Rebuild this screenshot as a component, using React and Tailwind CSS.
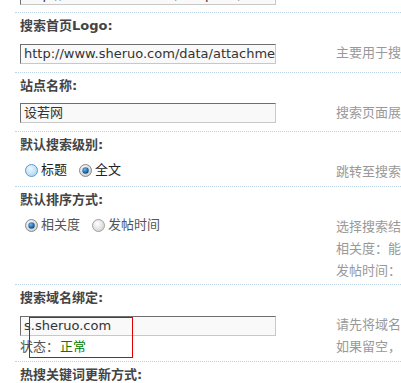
import React from 'react';

const FONT = { fontFamily: '"DejaVu Sans", "Noto Sans CJK SC", sans-serif' };

const Radio = ({ checked, tone }) => {
  if (checked) {
    return (
      <svg width="13" height="13" viewBox="0 0 13 13" className="shrink-0">
        <defs>
          <radialGradient id="rc" cx="0.4" cy="0.35" r="0.7">
            <stop offset="0" stopColor="#ffffff" />
            <stop offset="1" stopColor="#c9c9c9" />
          </radialGradient>
          <radialGradient id="dot" cx="0.4" cy="0.35" r="0.6">
            <stop offset="0" stopColor="#6fb6ee" />
            <stop offset="1" stopColor="#0b4f8e" />
          </radialGradient>
        </defs>
        <circle cx="6.5" cy="6.5" r="6" fill="url(#rc)" stroke="#8a8a8a" />
        <circle cx="6.5" cy="6.5" r="3.2" fill="url(#dot)" />
      </svg>
    );
  }
  if (tone === 'blue') {
    return (
      <svg width="13" height="13" viewBox="0 0 13 13" className="shrink-0">
        <defs>
          <radialGradient id="rb" cx="0.4" cy="0.35" r="0.7">
            <stop offset="0" stopColor="#eef8ff" />
            <stop offset="1" stopColor="#a9d4f5" />
          </radialGradient>
        </defs>
        <circle cx="6.5" cy="6.5" r="6" fill="url(#rb)" stroke="#5b9bd0" />
      </svg>
    );
  }
  return (
    <svg width="13" height="13" viewBox="0 0 13 13" className="shrink-0">
      <defs>
        <radialGradient id="rg" cx="0.4" cy="0.35" r="0.7">
          <stop offset="0" stopColor="#ffffff" />
          <stop offset="1" stopColor="#d2d2d2" />
        </radialGradient>
      </defs>
      <circle cx="6.5" cy="6.5" r="6" fill="url(#rg)" stroke="#a0a0a0" />
    </svg>
  );
};

const Input = ({ value }) => (
  <div className="w-[256px] h-[20px] bg-[#f9f9f9] border border-t-[#6e6e6e] border-l-[#6e6e6e] border-r-[#c8c8c8] border-b-[#c8c8c8] overflow-hidden whitespace-nowrap text-[13px] leading-[18px] text-[#333] pl-[3px]">
    {value}
  </div>
);

const Label = ({ children }) => (
  <div className="h-[26px] leading-[26px] pl-[5px] text-[13px] font-bold text-[#444]">{children}</div>
);

const Tip = ({ lines }) => (
  <div className="pt-[3px] text-[13px] leading-[22px] text-[#999] whitespace-nowrap">
    {lines.map((l) => (
      <div key={l}>{l}</div>
    ))}
  </div>
);

const Section = ({ label, height, left, tip }) => (
  <div className="border-t border-dotted border-[#bcd3e6]">
    <Label>{label}</Label>
    {left !== undefined && (
      <div className="flex" style={{ height }}>
        <div className="w-[321px] shrink-0 pl-[5px]">{left}</div>
        <Tip lines={tip} />
      </div>
    )}
  </div>
);

export default function App() {
  return (
    <div className="relative w-[401px] h-[383px] overflow-hidden bg-white pl-[15px]" style={FONT}>
      <div className="h-[12px] pl-[5px]">
        <div className="h-[5px] overflow-hidden">
          <div className="-mt-[15px]">
            <Input value="http://www.sheruo.com/template/technology/logo.png" />
          </div>
        </div>
      </div>

      <Section
        label="搜索首页Logo:"
        height="33px"
        left={<div className="pt-[5px]"><Input value="http://www.sheruo.com/data/attachment/common/logo.png" /></div>}
        tip={['主要用于搜索首页的标志显示']}
      />
      <Section
        label="站点名称:"
        height="32px"
        left={<div className="pt-[4px]"><Input value="设若网" /></div>}
        tip={['搜索页面展示的站点名称']}
      />
      <Section
        label="默认搜索级别:"
        height="28px"
        left={
          <div className="pt-[2px] pl-[5px] flex items-center h-[22px] text-[13px] text-[#222]">
            <Radio tone="blue" />
            <span className="ml-[3px]">标题</span>
            <span className="ml-[12px]"><Radio checked /></span>
            <span className="ml-[3px]">全文</span>
          </div>
        }
        tip={['跳转至搜索首页时的默认级别']}
      />
      <Section
        label="默认排序方式:"
        height="71px"
        left={
          <div className="pt-[2px] pl-[5px] flex items-center h-[22px] text-[13px] text-[#555]">
            <Radio checked />
            <span className="ml-[3px]">相关度</span>
            <span className="ml-[12px]"><Radio /></span>
            <span className="ml-[3px]">发帖时间</span>
          </div>
        }
        tip={['选择搜索结果的排序方式', '相关度：能够更准确地匹配', '发帖时间：这是按时间排序']}
      />
      <Section
        label="搜索域名绑定:"
        height="50px"
        left={
          <div className="pt-[5px]">
            <Input value="s.sheruo.com" />
            <div className="mt-[1px] h-[20px] leading-[20px] text-[13px] text-[#555]">
              状态：<span className="ml-[1px] text-[#008000]">正常</span>
            </div>
          </div>
        }
        tip={['请先将域名的DNS解析到服务器', '如果留空，将使用默认地址']}
      />
      <Section label="热搜关键词更新方式:" />

      <div className="absolute left-[29px] top-[317px] w-[104px] h-[41px] border border-[#e00000]" />
    </div>
  );
}
